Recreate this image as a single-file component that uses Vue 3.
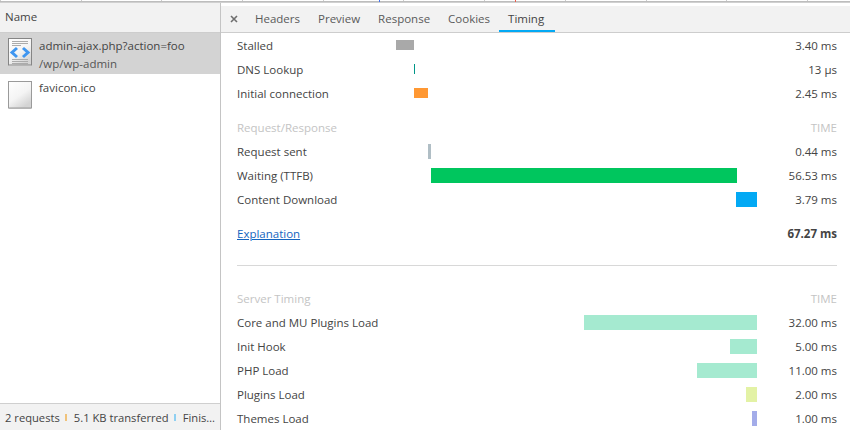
<script setup>
const ticks = 11
const first = [
  { name: 'Stalled', left: 396, width: 18, color: '#a9a9a9', time: '3.40 ms' },
  { name: 'DNS Lookup', left: 414, width: 1, color: '#009688', time: '13 µs' },
  { name: 'Initial connection', left: 414, width: 14, color: '#ff9833', time: '2.45 ms' }
]
const second = [
  { name: 'Request sent', left: 428, width: 3, color: '#b0bec5', time: '0.44 ms' },
  { name: 'Waiting (TTFB)', left: 431, width: 306, color: '#00c65e', time: '56.53 ms' },
  { name: 'Content Download', left: 736, width: 21, color: '#03a9f4', time: '3.79 ms' }
]
const server = [
  { name: 'Core and MU Plugins Load', left: 584, width: 173, color: '#a5ead0', time: '32.00 ms' },
  { name: 'Init Hook', left: 730, width: 27, color: '#a5ead0', time: '5.00 ms' },
  { name: 'PHP Load', left: 697, width: 60, color: '#a5ead0', time: '11.00 ms' },
  { name: 'Plugins Load', left: 746, width: 11, color: '#e3f2a5', time: '2.00 ms' },
  { name: 'Themes Load', left: 752, width: 5, color: '#a3ace9', time: '1.00 ms' }
]
const tabs = ['Headers', 'Preview', 'Response', 'Cookies', 'Timing']
const offset = (row) => ({ marginLeft: row.left - 396 + 'px', width: row.width + 'px', background: row.color })
</script>

<template>
  <div class="page">
    <div class="overview">
      <i v-for="n in ticks" :key="n" class="tick"></i>
      <b class="mark blue"></b>
      <b class="mark red"></b>
    </div>
    <div class="split">
      <aside class="list">
        <div class="list-head">Name</div>
        <div class="req selected">
          <svg class="file" width="24" height="28" viewBox="0 0 24 28">
            <defs>
              <linearGradient id="paper" x1="0" y1="0" x2="0.6" y2="1">
                <stop offset="0" stop-color="#ffffff" />
                <stop offset="0.6" stop-color="#f4f4f4" />
                <stop offset="1" stop-color="#d4d4d4" />
              </linearGradient>
            </defs>
            <rect x="0.5" y="0.5" width="23" height="26.5" fill="url(#paper)" stroke="#858585" />
            <path d="M1 27.5h22" stroke="#b5b5b5" />
            <path d="M4 3.5h16M4 5.5h16M4 7.5h9M4 21.5h16M4 23.5h16M4 25.5h16" stroke="#ababab" stroke-width="1" />
            <path d="M9 10 4 14.5l5 4.5M15 10l5 4.5-5 4.5" fill="none" stroke="#3f96f0" stroke-width="3" />
          </svg>
          <div class="req-text">
            <div>admin-ajax.php?action=foo</div>
            <div class="sub">/wp/wp-admin</div>
          </div>
        </div>
        <div class="req second-req">
          <svg class="file" width="24" height="28" viewBox="0 0 24 28">
            <defs>
              <linearGradient id="paper2" x1="0" y1="0" x2="0.6" y2="1">
                <stop offset="0" stop-color="#ffffff" />
                <stop offset="0.6" stop-color="#f4f4f4" />
                <stop offset="1" stop-color="#d4d4d4" />
              </linearGradient>
            </defs>
            <rect x="0.5" y="0.5" width="23" height="26.5" fill="url(#paper2)" stroke="#9a9a9a" />
            <path d="M1 27.5h22" stroke="#b5b5b5" />
          </svg>
          <div class="req-text">
            <div>favicon.ico</div>
          </div>
        </div>
        <div class="list-foot">
          <span>2 requests</span><i class="sep amber"></i><span>5.1 KB transferred</span><i class="sep sky"></i><span>Finis…</span>
        </div>
      </aside>
      <main class="detail">
        <nav class="tabs">
          <svg class="close" width="8" height="8" viewBox="0 0 8 8">
            <path d="M1 1l6 6M7 1 1 7" stroke="#6e6e6e" stroke-width="1.6" fill="none" />
          </svg>
          <span v-for="t in tabs" :key="t" class="tab" :class="{ active: t === 'Timing' }">{{ t }}</span>
        </nav>
        <section class="timing">
          <div v-for="r in first" :key="r.name" class="row">
            <span>{{ r.name }}</span>
            <div class="track"><div class="bar thin" :style="offset(r)"></div></div>
            <span class="time">{{ r.time }}</span>
          </div>
          <div class="row head gap-top">
            <span>Request/Response</span>
            <div class="track"></div>
            <span class="time">TIME</span>
          </div>
          <div v-for="r in second" :key="r.name" class="row">
            <span>{{ r.name }}</span>
            <div class="track"><div class="bar" :style="offset(r)"></div></div>
            <span class="time">{{ r.time }}</span>
          </div>
          <div class="row total">
            <a class="link">Explanation</a>
            <div class="track"></div>
            <span class="time strong">67.27 ms</span>
          </div>
          <hr class="rule" />
          <div class="row head">
            <span>Server Timing</span>
            <div class="track"></div>
            <span class="time">TIME</span>
          </div>
          <div v-for="r in server" :key="r.name" class="row">
            <span>{{ r.name }}</span>
            <div class="track"><div class="bar" :style="offset(r)"></div></div>
            <span class="time">{{ r.time }}</span>
          </div>
        </section>
      </main>
    </div>
  </div>
</template>

<style scoped>
.page {
  width: 850px;
  height: 430px;
  overflow: hidden;
  background: #fff;
  display: flex;
  flex-direction: column;
  font-family: "Open Sans", "Noto Sans", sans-serif;
  font-size: 11.5px;
  color: #444;
}
.overview {
  position: relative;
  height: 2px;
  flex: none;
  display: flex;
  box-sizing: border-box;
  border-bottom: 1px solid #bdbdbd;
}
.tick {
  width: 80.7px;
  flex: none;
  border-left: 1px solid #ccc;
  box-sizing: border-box;
}
.mark {
  position: absolute;
  top: 0;
  width: 1px;
  height: 2px;
}
.blue { left: 379px; background: #3f6ff0; }
.red { left: 515px; background: #ee5a4a; }
.split {
  flex: 1;
  min-height: 0;
  display: flex;
  border-top: 1px solid #d0d0d0;
}
.list {
  width: 221px;
  flex: none;
  box-sizing: border-box;
  border-right: 1px solid #c4c4c4;
  display: flex;
  flex-direction: column;
}
.list-head {
  height: 30px;
  box-sizing: border-box;
  flex: none;
  background: #f2f2f2;
  border-bottom: 1px solid #cdcdcd;
  padding: 0 5px;
  line-height: 27px;
}
.req {
  height: 41px;
  flex: none;
  display: flex;
  box-sizing: border-box;
  padding: 5px 8px 0;
}
.second-req {
  padding-top: 7px;
}
.second-req .req-text {
  margin-top: -2px;
}
.selected { background: #d3d3d3; }
.file { flex: none; }
.req-text {
  margin-left: 7px;
  line-height: 18px;
  margin-top: -1px;
  white-space: nowrap;
}
.sub { color: #555; }
.list-foot {
  margin-top: auto;
  height: 27px;
  flex: none;
  box-sizing: border-box;
  background: #f2f2f2;
  border-top: 1px solid #cfcfcf;
  padding: 0 5px;
  display: flex;
  align-items: center;
  white-space: nowrap;
  overflow: hidden;
  font-size: 11.2px;
}
.sep {
  flex: none;
  width: 2px;
  height: 7px;
  margin: 1px 7px 0 5px;
}
.amber { background: #f0c27a; }
.sky { background: #8fd0f2; }
.detail {
  flex: 1;
  min-width: 0;
  display: flex;
  flex-direction: column;
}
.tabs {
  margin-top: 3px;
  height: 27px;
  flex: none;
  box-sizing: border-box;
  background: #f2f2f2;
  border-bottom: 1px solid #cdcdcd;
  display: flex;
  padding-left: 9px;
}
.close {
  flex: none;
  margin: 9px 8px 0 0;
}
.tab {
  padding: 0 9px;
  line-height: 26px;
  height: 26px;
  box-sizing: border-box;
  color: #5a5a5a;
}
.tab.active {
  color: #444;
  padding-right: 11px;
  border-bottom: 2px solid #03a9f4;
}
.timing {
  padding: 0 13px 0 16px;
}
.row {
  display: flex;
  height: 24px;
  align-items: center;
}
.row > span:first-child,
.row > a:first-child {
  width: 159px;
  flex: none;
  white-space: nowrap;
}
.track {
  flex: 1;
  min-width: 0;
}
.bar {
  height: 15px;
}
.bar.thin {
  height: 10px;
}
.time {
  width: 80px;
  flex: none;
  text-align: right;
}
.strong { font-weight: 700; }
.head { color: #c4c4c4; }
.gap-top { margin-top: 10px; }
.total { margin-top: 10px; }
.link {
  color: #1565c0;
  text-decoration: underline;
}
.rule {
  margin: 20px 0 20px;
  height: 1px;
  border: 0;
  background: #d8d8d8;
}
</style>
